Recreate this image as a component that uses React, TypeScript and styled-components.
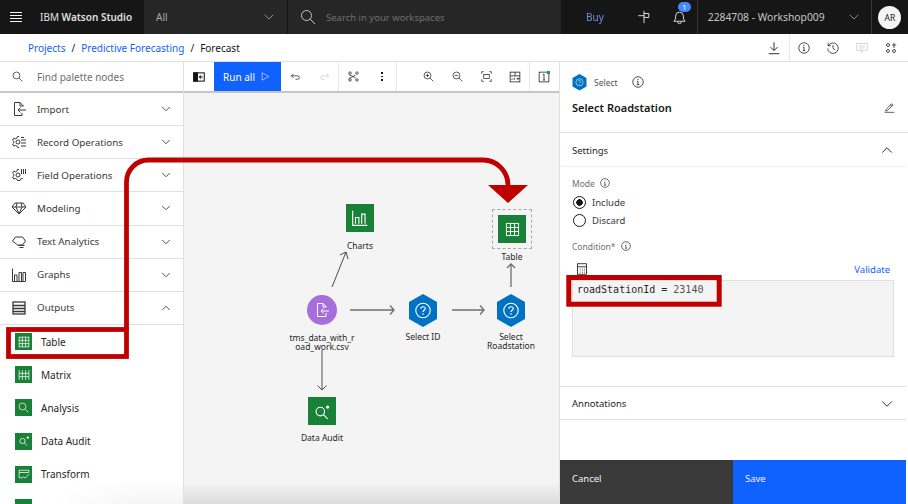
import { ReactNode } from 'react';
import styled, { createGlobalStyle } from 'styled-components';
import { ChevronDown, ChevronUp } from 'lucide-react';

const GlobalStyle = createGlobalStyle`
  html, body {
    margin: 0;
    padding: 0;
    background: #fff;
    overflow: hidden;
  }
  * {
    box-sizing: border-box;
  }
`;

function Svg({ size = 16, color = 'currentColor', width = 1, children }: { size?: number; color?: string; width?: number; children: ReactNode }) {
  return (
    <svg width={size} height={size} viewBox="0 0 16 16" fill="none" stroke={color} strokeWidth={width} style={{ display: 'block', flex: 'none' }}>
      {children}
    </svg>
  );
}

const SearchGlyph = ({ size = 14, color = '#161616' }: { size?: number; color?: string }) => (
  <Svg size={size} color={color}>
    <circle cx="6.5" cy="6.5" r="5" />
    <path d="M10.2 10.2 15 15" />
  </Svg>
);

const InfoGlyph = ({ size = 12 }: { size?: number }) => (
  <Svg size={size} color="#161616">
    <circle cx="8" cy="8" r="7" />
    <path d="M8 7v4.5M6.2 11.5h3.6M6.6 7H8" />
    <circle cx="8" cy="4.5" r=".7" fill="#161616" stroke="none" />
  </Svg>
);

const Hexagon = ({ size = 30 }: { size?: number }) => (
  <svg width={size} height={size * 1.1} viewBox="0 0 30 33" style={{ display: 'block', flex: 'none' }}>
    <path d="M15 0 29 8v17l-14 8-14-8V8z" fill="#0072c3" />
    <circle cx="15" cy="16.5" r="7.2" fill="none" stroke="#fff" strokeWidth="1.1" />
    <path d="M12.8 14.800c0-1.300 1-2.100 2.200-2.100s2.200.8 2.200 2c0 1.600-2.200 1.600-2.200 3.300" fill="none" stroke="#fff" strokeWidth="1.1" />
    <circle cx="15" cy="20" r=".8" fill="#fff" />
  </svg>
);

const TableGlyph = ({ size = 12 }: { size?: number }) => (
  <Svg size={size} color="#fff">
    <rect x="1.500" y="1.500" width="13" height="13" />
    <path d="M1.500 5.800h13M1.500 10.200h13M5.800 1.500v13M10.200 1.500v13" />
  </Svg>
);

const paletteItems: { label: string; icon: ReactNode; open?: boolean }[] = [
  {
    label: 'Import',
    icon: (
      <Svg>
        <path d="M9 1.500H3.500v13H11V12M9 1.500 12.500 5H9zM15 9H7M9.500 6.500 7 9l2.500 2.500" />
      </Svg>
    ),
  },
  {
    label: 'Record Operations',
    icon: (
      <Svg>
        <path d="M8 2.500h-1.500l-.6 1.600-1.500.7-1.600-.6-1.200 2 1.200 1.100v1.600L1.600 10l1.200 2 1.600-.6 1.500.7.600 1.400H8" />
        <circle cx="7" cy="8" r="2" />
        <path d="M10 6h5M10 9h5M10 12h5M10 3.500h3" />
      </Svg>
    ),
  },
  {
    label: 'Field Operations',
    icon: (
      <Svg>
        <path d="M8 2.500h-1.500l-.6 1.600-1.500.7-1.600-.6-1.200 2 1.200 1.100v1.600L1.600 10l1.200 2 1.600-.6 1.500.7.600 1.400H9l.8-1.600 2-.7" />
        <circle cx="7" cy="8" r="2" />
        <path d="M10.500 2v5M12.500 2v5M14.500 2v5" />
      </Svg>
    ),
  },
  {
    label: 'Modeling',
    icon: (
      <Svg>
        <path d="M4 3h8l3 4-7 7-7-7zM1 7h14M6 3 5 7l3 7 3-7-1-4" />
      </Svg>
    ),
  },
  {
    label: 'Text Analytics',
    icon: (
      <Svg>
        <path d="M4.500 3h7l3 4-3 4H6.500L1.500 7zM7.500 11.500h6M8.500 13.500h4" />
      </Svg>
    ),
  },
  {
    label: 'Graphs',
    icon: (
      <Svg>
        <path d="M1.500 1.500v13h13M3.500 14V8h2.500v6M8 14V5.500h2.500V14M12 14V5.500h2.500V14" />
      </Svg>
    ),
  },
  {
    label: 'Outputs',
    open: true,
    icon: (
      <Svg width={1.3}>
        <rect x="2" y="2" width="12" height="12" />
        <path d="M2 5.500h12M2 8.500h12M2 11.500h12" />
      </Svg>
    ),
  },
];

const outputItems: { label: string; icon: ReactNode }[] = [
  { label: 'Table', icon: <TableGlyph /> },
  {
    label: 'Matrix',
    icon: (
      <Svg size={12} color="#fff">
        <path d="M1.500 1.500v13M14.500 1.500v13M1.500 5.800h13M1.500 10.200h13M5.800 1.500v13M10.200 1.500v13" />
      </Svg>
    ),
  },
  { label: 'Analysis', icon: <SearchGlyph size={11} color="#fff" /> },
  {
    label: 'Data Audit',
    icon: (
      <Svg size={12} color="#fff">
        <circle cx="6" cy="8" r="3.500" />
        <path d="M8.500 10.500 12 14" />
        <circle cx="13" cy="3.500" r="1.500" fill="#fff" stroke="none" />
      </Svg>
    ),
  },
  {
    label: 'Transform',
    icon: (
      <Svg size={12} color="#fff">
        <path d="M1.500 3h13v3h-13zM1.500 6v7H7M7 11l2.500 2.500L15 8" />
      </Svg>
    ),
  },
];

export default function App() {
  return (
    <Page>
      <GlobalStyle />
      <TopBar>
        <Brand>
          <MenuBars>
            <span />
            <span />
            <span />
            <span />
          </MenuBars>
          <BrandName>
            IBM <b>Watson Studio</b>
          </BrandName>
        </Brand>
        <ScopeSelect>
          <span>All</span>
          <ChevronDown size={16} strokeWidth={1.2} />
        </ScopeSelect>
        <WorkspaceSearch>
          <SearchGlyph size={16} color="#c6c6c6" />
          <span>Search in your workspaces</span>
        </WorkspaceSearch>
        <TopActions>
          <BuyLink>Buy</BuyLink>
          <SignpostIcon>
            <Svg size={14} color="#f4f4f4">
              <path d="M8 1v14M8 4h5.500v4.500H8M8 6.500H1.500" />
            </Svg>
          </SignpostIcon>
          <BellWrap>
            <Svg size={15} color="#e0e0e0">
              <path d="M2 12h12l-1.800-2.500V6.500a4.200 4.200 0 0 0-8.400 0v3zM6 12.500a2 2 0 0 0 4 0" />
            </Svg>
            <BellCount>1</BellCount>
          </BellWrap>
          <AccountSelect>
            <span>2284708 - Workshop009</span>
            <ChevronDown size={16} strokeWidth={1.2} color="#a8a8a8" />
          </AccountSelect>
          <AvatarCell>
            <Avatar>AR</Avatar>
          </AvatarCell>
        </TopActions>
      </TopBar>

      <BreadcrumbBar>
        <Crumbs>
          <CrumbLink>Projects</CrumbLink>
          <span>/</span>
          <CrumbLink>Predictive Forecasting</CrumbLink>
          <span>/</span>
          <span>Forecast</span>
        </Crumbs>
        <CrumbActions>
          <CrumbIcon $wide>
            <Svg size={14}>
              <path d="M8 1.500v9M4 7l4 4 4-4M2 14.500h12" />
            </Svg>
          </CrumbIcon>
          <CrumbIcon $divided>
            <InfoGlyph />
          </CrumbIcon>
          <CrumbIcon>
            <Svg size={12}>
              <path d="M1.500 1.500v3.500H5M1.800 5A7 7 0 1 1 1 8.500M8 4v4.500l3 2" />
            </Svg>
          </CrumbIcon>
          <CrumbIcon>
            <Svg size={12} color="#c6c6c6">
              <path d="M1 2h14v9H9l-2 3v-3H1zM4 5.500h8M4 8h6" />
            </Svg>
          </CrumbIcon>
          <CrumbIcon>
            <Svg size={12}>
              <circle cx="4" cy="12" r="2" />
              <circle cx="12" cy="12" r="2" />
              <circle cx="4" cy="4" r="2" />
              <path d="M12 1v7M9.500 4H15" />
            </Svg>
          </CrumbIcon>
        </CrumbActions>
      </BreadcrumbBar>

      <Workspace>
        <Palette>
          <PaletteSearch>
            <SearchGlyph size={11} />
            <span>Find palette nodes</span>
          </PaletteSearch>
          {paletteItems.map((item) => (
            <PaletteRow key={item.label}>
              <PaletteIcon>{item.icon}</PaletteIcon>
              <span>{item.label}</span>
              {item.open ? <ChevronUp size={14} strokeWidth={1.5} /> : <ChevronDown size={14} strokeWidth={1.5} />}
            </PaletteRow>
          ))}
          <OutputList>
            {outputItems.map((item) => (
              <OutputRow key={item.label}>
                <GreenTile>{item.icon}</GreenTile>
                <span>{item.label}</span>
              </OutputRow>
            ))}
            <OutputRow>
              <GreenTile />
            </OutputRow>
          </OutputList>
          <PaletteFade />
        </Palette>

        <CanvasColumn>
          <CanvasToolbar>
            <ToolButton $width={30}>
              <Svg size={12} width={1.4}>
                <rect x="1" y="2.500" width="14" height="11" />
                <rect x="1" y="2.500" width="5" height="11" fill="#161616" />
                <path d="M13 8H8.500M10.500 6 8.500 8l2 2" />
              </Svg>
            </ToolButton>
            <RunButton>
              Run all
              <Svg size={9} color="#fff">
                <path d="M2 1.500 14 8 2 14.500z" />
              </Svg>
            </RunButton>
            <ToolButton $width={29}>
              <Svg size={11}>
                <path d="M5 4 2 7l3 3M2 7h9a2.500 2.500 0 0 1 0 5H8" />
              </Svg>
            </ToolButton>
            <ToolButton $width={29} $divided>
              <Svg size={11} color="#c6c6c6">
                <path d="M11 4l3 3-3 3M14 7H5a2.500 2.500 0 0 0 0 5h3" />
              </Svg>
            </ToolButton>
            <ToolButton $width={29}>
              <Svg size={11}>
                <circle cx="3" cy="3" r="1.800" />
                <circle cx="3" cy="13" r="1.800" />
                <circle cx="13" cy="3" r="1.800" />
                <circle cx="13" cy="13" r="1.800" />
                <path d="M1 5l10 5M1 11l10-5" />
              </Svg>
            </ToolButton>
            <ToolButton $width={29} $divided>
              <DotStack>
                <i />
                <i />
                <i />
              </DotStack>
            </ToolButton>
            <ToolGap />
            <ToolButton $width={29}>
              <Svg size={11}>
                <circle cx="6.500" cy="6.500" r="5" />
                <path d="M10.200 10.200 15 15M6.500 4v5M4 6.500h5" />
              </Svg>
            </ToolButton>
            <ToolButton $width={29}>
              <Svg size={11}>
                <circle cx="6.500" cy="6.500" r="5" />
                <path d="M10.200 10.200 15 15M4 6.500h5" />
              </Svg>
            </ToolButton>
            <ToolButton $width={29}>
              <Svg size={11}>
                <path d="M1 4V1h3M12 1h3v3M1 12v3h3M12 15h3v-3" />
                <rect x="4" y="5" width="8" height="6" />
              </Svg>
            </ToolButton>
            <ToolButton $width={29} $divided>
              <Svg size={12}>
                <rect x="1.500" y="1.500" width="13" height="13" />
                <path d="M1.500 6.500h13M8 1.500v5M4 12v-2M7 12v-3M12 12v-2M10 10h4" />
              </Svg>
            </ToolButton>
            <ToolButton $width={28}>
              <MessageCount>
                <Svg size={12}>
                  <rect x="1.500" y="1.500" width="13" height="13" />
                  <path d="M6.500 5 8 4v8M6.500 12h3" />
                </Svg>
                <GreenDot />
              </MessageCount>
            </ToolButton>
          </CanvasToolbar>

          <Canvas>
            <Connectors width="376" height="412" viewBox="0 0 376 412">
              <g fill="none" stroke="#4c4c4c" strokeWidth="1">
                <path d="M148 194 162 159M156 162l6-3 2 7" />
              </g>
              <g fill="none" stroke="#6f6f6f" strokeWidth="1.300">
                <path d="M166 217H210M206 212.500l4 4.500-4 4.500" />
                <path d="M268 217H300M296 212.500l4 4.500-4 4.500" />
                <path d="M327 194V171M323 175l4-4 4 4" />
              </g>
              <path d="M138 257V297M133.500 292.500l4.500 4.500 4.500-4.500" fill="none" stroke="#4c4c4c" strokeWidth="1" />
            </Connectors>

            <FlowNode $x={176} $y={111}>
              <NodeTile>
                <Svg size={18} color="#fff">
                  <path d="M1.500 1.500v13h13M4 13V7.500h3V13M9.500 13V4.500h3V13" />
                </Svg>
              </NodeTile>
              <NodeLabel $gap={9}>Charts</NodeLabel>
            </FlowNode>

            <FlowNode $x={328} $y={116}>
              <SelectedFrame>
                <NodeTile>
                  <TableGlyph size={15} />
                </NodeTile>
              </SelectedFrame>
              <NodeLabel $gap={3}>Table</NodeLabel>
            </FlowNode>

            <FlowNode $x={138} $y={202}>
              <SourceCircle>
                <Svg size={16} color="#fff">
                  <path d="M9 1.500H3.500v13H12V11M9 1.500 12.500 5H9zM15 9H7M9.500 6.500 7 9l2.500 2.500" />
                </Svg>
              </SourceCircle>
              <NodeLabel $gap={8}>
                tms_data_with_r
                <br />
                oad_work.csv
              </NodeLabel>
            </FlowNode>

            <FlowNode $x={239} $y={201}>
              <Hexagon />
              <NodeLabel $gap={5}>Select ID</NodeLabel>
            </FlowNode>

            <FlowNode $x={327} $y={201}>
              <Hexagon />
              <NodeLabel $gap={5}>
                Select
                <br />
                Roadstation
              </NodeLabel>
            </FlowNode>

            <FlowNode $x={138} $y={304}>
              <NodeTile>
                <Svg size={18} color="#fff">
                  <circle cx="6.500" cy="8.500" r="3.800" />
                  <path d="M9.300 11.300 13 15" />
                  <circle cx="13" cy="4.500" r="1.500" fill="#fff" stroke="none" />
                </Svg>
              </NodeTile>
              <NodeLabel $gap={8}>Data Audit</NodeLabel>
            </FlowNode>
            <CanvasFade />
          </Canvas>
        </CanvasColumn>

        <Panel>
          <PanelHead>
            <NodeKind>
              <Hexagon size={15} />
              <KindLabel>Select</KindLabel>
              <InfoGlyph />
            </NodeKind>
            <PanelTitleRow>
              <PanelTitle>Select Roadstation</PanelTitle>
              <Svg size={11}>
                <path d="M3 11 11 2.500l2 2L5 12.500l-2.500.5zM9.500 4l2 2M1 15h14" />
              </Svg>
            </PanelTitleRow>
          </PanelHead>

          <SectionHeader>
            <span>Settings</span>
            <ChevronUp size={18} strokeWidth={1.3} />
          </SectionHeader>
          <SettingsBody>
            <FieldLabel>
              Mode <InfoGlyph size={10} />
            </FieldLabel>
            <RadioRow>
              <Radio $checked />
              Include
            </RadioRow>
            <RadioRow>
              <Radio />
              Discard
            </RadioRow>
            <ConditionLabel>
              Condition* <InfoGlyph size={10} />
            </ConditionLabel>
            <ConditionTools>
              <Svg size={12} width={1.100}>
                <rect x="2" y="1" width="12" height="14" />
                <path d="M2 5h12M5 8h1M8 8h1M11 8h1M5 10.500h1M8 10.500h1M11 10.500h1M5 13h1M8 13h1M11 13h1" />
              </Svg>
              <ValidateLink>Validate</ValidateLink>
            </ConditionTools>
            <ConditionBox>
              roadStationId = <ConditionValue>23140</ConditionValue>
            </ConditionBox>
          </SettingsBody>
          <AnnotationsRow>
            <span>Annotations</span>
            <ChevronDown size={18} strokeWidth={1.3} />
          </AnnotationsRow>
          <PanelFooter>
            <FooterButton $color="#393939">Cancel</FooterButton>
            <FooterButton $color="#0f62fe">Save</FooterButton>
          </PanelFooter>
        </Panel>
      </Workspace>

      <Callouts width="908" height="504" viewBox="0 0 908 504">
        <g fill="none" stroke="#c00000">
          <rect x="8.500" y="329.500" width="118" height="27" strokeWidth="4.800" />
          <path d="M126.500 330V182a22 22 0 0 1 22-22H483a25 25 0 0 1 25 25v2" strokeWidth="4.800" />
          <rect x="568.800" y="277.500" width="150.400" height="26.700" strokeWidth="5" />
        </g>
        <path d="M488 185H528L508 203z" fill="#c00000" />
      </Callouts>
    </Page>
  );
}

const Page = styled.div`
  position: relative;
  display: flex;
  flex-direction: column;
  width: 908px;
  height: 504px;
  overflow: hidden;
  background: #fff;
  color: #161616;
  font-family: 'Noto Sans', 'Liberation Sans', sans-serif;
  font-size: 10px;
`;

const TopBar = styled.header`
  display: flex;
  flex: none;
  height: 34px;
  background: #161616;
  color: #c6c6c6;
`;

const Brand = styled.div`
  display: flex;
  align-items: center;
  width: 144px;
  padding-left: 10px;
  gap: 18px;
`;

const MenuBars = styled.div`
  display: flex;
  flex-direction: column;
  gap: 2px;
  width: 12px;

  span {
    display: block;
    height: 1px;
    background: #f4f4f4;
  }
`;

const BrandName = styled.div`
  color: #e0e0e0;
  font-size: 10px;
  white-space: nowrap;

  b {
    font-weight: 600;
  }
`;

const ScopeSelect = styled.div`
  display: flex;
  align-items: center;
  justify-content: space-between;
  width: 144px;
  padding: 0 10px 0 12px;
  background: #262626;
  border-right: 1px solid #161616;
  color: #a8a8a8;
  font-size: 10px;
`;

const WorkspaceSearch = styled.div`
  display: flex;
  align-items: center;
  gap: 10px;
  width: 273px;
  padding-left: 12px;
  background: #262626;
  color: #6f6f6f;
  font-size: 9.500px;
`;

const TopActions = styled.div`
  position: relative;
  display: flex;
  flex: 1;
  align-items: center;
`;

const BuyLink = styled.span`
  margin-left: 25px;
  color: #78a9ff;
  font-size: 10px;
  opacity: 0.85;
`;

const SignpostIcon = styled.span`
  margin-left: 33px;
`;

const BellWrap = styled.span`
  position: relative;
  margin-left: 21px;
`;

const BellCount = styled.span`
  position: absolute;
  top: -8px;
  left: 6px;
  width: 13px;
  height: 10px;
  border-radius: 5px;
  background: #4589ff;
  color: #fff;
  font-size: 7.500px;
  line-height: 10px;
  text-align: center;
`;

const AccountSelect = styled.div`
  display: flex;
  align-items: center;
  justify-content: space-between;
  align-self: stretch;
  width: 175px;
  margin-left: 10px;
  padding: 0 9px 0 10px;
  border-left: 1px solid #393939;
  border-right: 1px solid #393939;
  font-size: 10.300px;
  white-space: nowrap;
`;

const AvatarCell = styled.div`
  display: flex;
  flex: 1;
  justify-content: center;
`;

const Avatar = styled.div`
  display: flex;
  align-items: center;
  justify-content: center;
  width: 23px;
  height: 23px;
  border-radius: 50%;
  background: #f4f4f4;
  color: #161616;
  font-size: 8.500px;
`;

const BreadcrumbBar = styled.div`
  display: flex;
  flex: none;
  align-items: center;
  justify-content: space-between;
  height: 28px;
  padding-left: 28px;
  border-bottom: 1px solid #e0e0e0;
`;

const Crumbs = styled.div`
  display: flex;
  gap: 6px;
  font-size: 10px;
`;

const CrumbLink = styled.span`
  color: #0f62fe;
`;

const CrumbActions = styled.div`
  display: flex;
  align-items: stretch;
  height: 100%;
  padding-right: 3px;
`;

const CrumbIcon = styled.div<{ $divided?: boolean; $wide?: boolean }>`
  display: flex;
  align-items: center;
  justify-content: center;
  width: ${(p) => (p.$wide ? 30 : 29)}px;
  border-left: ${(p) => (p.$divided ? '1px solid #e8e8e8' : 'none')};
`;

const Workspace = styled.div`
  display: flex;
  flex: 1;
  min-height: 0;
`;

const Palette = styled.aside`
  position: relative;
  flex: none;
  width: 184px;
  overflow: hidden;
  border-right: 1px solid #e0e0e0;
`;

const PaletteSearch = styled.div`
  display: flex;
  align-items: center;
  gap: 14px;
  height: 31px;
  padding-left: 12px;
  border-bottom: 2px solid #c6c6c6;
  color: #6f6f6f;
  font-size: 10px;
`;

const PaletteRow = styled.div`
  display: flex;
  align-items: center;
  height: 33.150px;
  padding: 0 10px 0 11px;
  border-bottom: 1px solid #e0e0e0;
  color: #393939;
  font-size: 9.800px;

  span:nth-child(2) {
    flex: 1;
    margin-left: 11px;
  }
`;

const PaletteIcon = styled.span`
  display: block;
  width: 15px;
`;

const OutputList = styled.div`
  display: flex;
  flex-direction: column;
`;

const OutputRow = styled.div`
  display: flex;
  flex: none;
  align-items: center;
  gap: 9px;
  height: 33.200px;
  padding-left: 15px;
  color: #262626;
  font-size: 10px;
`;

const GreenTile = styled.div`
  display: flex;
  align-items: center;
  justify-content: center;
  width: 17px;
  height: 17px;
  background: #198038;
`;

const PaletteFade = styled.div`
  position: absolute;
  right: 0;
  bottom: 0;
  left: 0;
  height: 24px;
  background: linear-gradient(rgba(0, 0, 0, 0), rgba(0, 0, 0, 0.04));
  mask-image: linear-gradient(to right, transparent 30%, #000 75%);
`;

const CanvasColumn = styled.div`
  display: flex;
  flex: none;
  flex-direction: column;
  width: 375px;
`;

const CanvasToolbar = styled.div`
  display: flex;
  flex: none;
  height: 31px;
  border-bottom: 2px solid #c6c6c6;
`;

const ToolButton = styled.div<{ $width: number; $divided?: boolean }>`
  display: flex;
  flex: none;
  align-items: center;
  justify-content: center;
  width: ${(p) => p.$width}px;
  border-right: ${(p) => (p.$divided ? '1px solid #e8e8e8' : 'none')};
`;

const ToolGap = styled.div`
  width: 17px;
`;

const RunButton = styled.div`
  display: flex;
  flex: none;
  align-items: center;
  justify-content: center;
  gap: 6px;
  width: 67px;
  padding-right: 2px;
  background: #0f62fe;
  color: #fff;
  font-size: 10px;
`;

const DotStack = styled.div`
  display: flex;
  flex-direction: column;
  gap: 2px;

  i {
    display: block;
    width: 1.500px;
    height: 1.500px;
    background: #161616;
  }
`;

const MessageCount = styled.div`
  position: relative;
`;

const GreenDot = styled.span`
  position: absolute;
  top: 0;
  right: 0;
  width: 3px;
  height: 3px;
  background: #24a148;
`;

const Canvas = styled.div`
  position: relative;
  flex: 1;
  overflow: hidden;
  background: #f4f4f4;
`;

const Connectors = styled.svg`
  position: absolute;
  top: 0;
  left: 0;
`;

const FlowNode = styled.div<{ $x: number; $y: number }>`
  position: absolute;
  top: ${(p) => p.$y}px;
  left: ${(p) => p.$x}px;
  display: flex;
  flex-direction: column;
  align-items: center;
  width: 100px;
  margin-left: -50px;
`;

const NodeTile = styled.div`
  display: flex;
  flex: none;
  align-items: center;
  justify-content: center;
  width: 28px;
  height: 28px;
  background: #198038;
`;

const SelectedFrame = styled.div`
  display: flex;
  align-items: center;
  justify-content: center;
  width: 40px;
  height: 40px;
  border: 1px dashed #a8a8a8;
`;

const SourceCircle = styled.div`
  display: flex;
  align-items: center;
  justify-content: center;
  width: 30px;
  height: 30px;
  border-radius: 50%;
  background: #a56eda;
`;

const NodeLabel = styled.div<{ $gap: number }>`
  margin-top: ${(p) => p.$gap}px;
  color: #262626;
  font-size: 8.500px;
  line-height: 9px;
  text-align: center;
`;

const CanvasFade = styled.div`
  position: absolute;
  right: 0;
  bottom: 0;
  left: 0;
  height: 22px;
  background: linear-gradient(rgba(0, 0, 0, 0), rgba(0, 0, 0, 0.1));
`;

const Panel = styled.section`
  display: flex;
  flex: none;
  flex-direction: column;
  width: 349px;
  border-left: 1px solid #e0e0e0;
  background: #fff;
`;

const PanelHead = styled.div`
  height: 71px;
  padding: 12px 13px 0 12px;
  border-bottom: 1px solid #e0e0e0;
`;

const NodeKind = styled.div`
  display: flex;
  align-items: center;
  gap: 7px;
`;

const KindLabel = styled.span`
  margin-right: 7px;
  color: #525252;
  font-size: 8.500px;
`;

const PanelTitleRow = styled.div`
  display: flex;
  align-items: center;
  justify-content: space-between;
  margin-top: 9px;
`;

const PanelTitle = styled.div`
  font-size: 11px;
  font-weight: 600;
`;

const SectionHeader = styled.div`
  display: flex;
  flex: none;
  align-items: center;
  justify-content: space-between;
  height: 34px;
  padding: 1px 10px 0 12px;
  margin-right: 2px;
  border-bottom: 1px solid #f0f0f0;
  font-size: 9.500px;
  color: #262626;
`;

const SettingsBody = styled.div`
  height: 219px;
  padding: 10px 14px 0 12px;
`;

const FieldLabel = styled.div`
  display: flex;
  align-items: center;
  gap: 5px;
  height: 12px;
  color: #6f6f6f;
  font-size: 8.500px;
`;

const RadioRow = styled.div`
  display: flex;
  align-items: center;
  gap: 6px;
  height: 18px;
  color: #393939;
  font-size: 9.500px;

  ${FieldLabel} + & {
    margin-top: 4px;
  }
`;

const Radio = styled.span<{ $checked?: boolean }>`
  display: block;
  flex: none;
  width: 13px;
  height: 13px;
  margin-left: 1px;
  border: 1px solid #161616;
  border-radius: 50%;
  background: ${(p) => (p.$checked ? 'radial-gradient(circle, #161616 3px, transparent 3.5px)' : 'transparent')};
`;

const ConditionLabel = styled(FieldLabel)`
  margin-top: 11px;
`;

const ConditionTools = styled.div`
  display: flex;
  align-items: center;
  justify-content: space-between;
  height: 14px;
  margin-top: 10px;
  padding: 0 4px;
`;

const ValidateLink = styled.span`
  color: #0f62fe;
  font-size: 9.500px;
`;

const ConditionBox = styled.div`
  height: 77px;
  margin-top: 4px;
  padding: 3px 4px;
  border: 1px solid #e0e0e0;
  background: #f4f4f4;
  color: #262626;
  font-family: 'DejaVu Sans Mono', 'Liberation Mono', monospace;
  font-size: 10px;
`;

const ConditionValue = styled.span`
  color: #525252;
`;

const AnnotationsRow = styled(SectionHeader)`
  border-top: 1px solid #e0e0e0;
  border-bottom: 1px solid #e0e0e0;
`;

const PanelFooter = styled.div`
  display: flex;
  height: 44px;
  margin-top: auto;
  margin-right: 2px;
`;

const FooterButton = styled.div<{ $color: string }>`
  display: flex;
  flex: 1;
  align-items: center;
  padding: 0 0 8px 12px;
  background: ${(p) => p.$color};
  color: #f4f4f4;
  font-size: 9.500px;
`;

const Callouts = styled.svg`
  position: absolute;
  top: 0;
  left: 0;
  pointer-events: none;
`;
